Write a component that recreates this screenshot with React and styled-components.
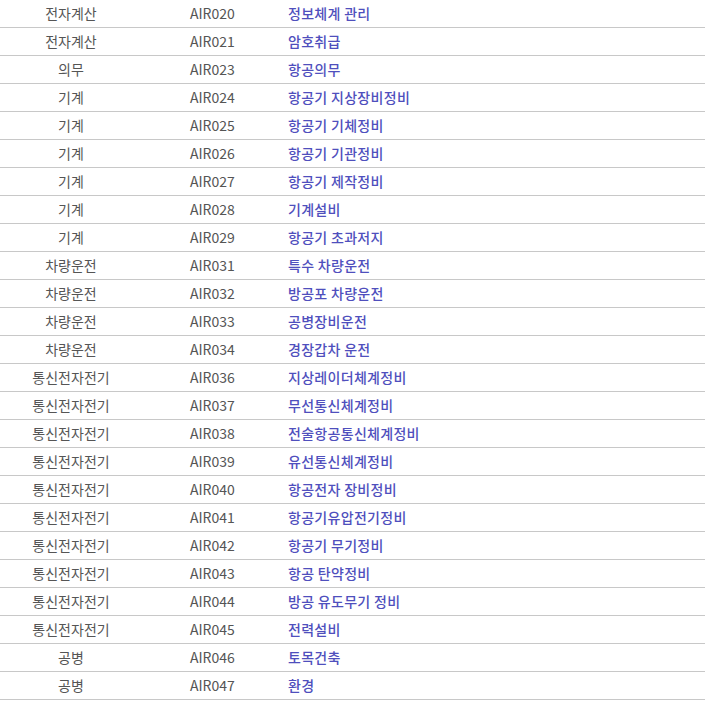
import React from "react";
import styled, { createGlobalStyle } from "styled-components";

const G = createGlobalStyle`
  body { margin: 0; background: #fff; font-family: "Noto Sans CJK KR", "Noto Sans", sans-serif; }
`;
const Table = styled.div`width: 705px; display: flex; flex-direction: column;`;
const Row = styled.div`
  display: grid; grid-template-columns: 142px 146px 1fr;
  height: 27px; border-bottom: 1px solid #c8c8c8; align-items: center;
  font-size: 14px; color: #555; line-height: 27px;
`;
const Cat = styled.div`text-align: center;`;
const Code = styled.div`padding-left: 48px;`;
const Name = styled.div`color: #4f4fbd; font-weight: 500; letter-spacing: 0.3px;`;

const data = [
["전자계산","AIR020","정보체계 관리"],["전자계산","AIR021","암호취급"],["의무","AIR023","항공의무"],
["기계","AIR024","항공기 지상장비정비"],["기계","AIR025","항공기 기체정비"],["기계","AIR026","항공기 기관정비"],
["기계","AIR027","항공기 제작정비"],["기계","AIR028","기계설비"],["기계","AIR029","항공기 초과저지"],
["차량운전","AIR031","특수 차량운전"],["차량운전","AIR032","방공포 차량운전"],["차량운전","AIR033","공병장비운전"],
["차량운전","AIR034","경장갑차 운전"],["통신전자전기","AIR036","지상레이더체계정비"],["통신전자전기","AIR037","무선통신체계정비"],
["통신전자전기","AIR038","전술항공통신체계정비"],["통신전자전기","AIR039","유선통신체계정비"],["통신전자전기","AIR040","항공전자 장비정비"],
["통신전자전기","AIR041","항공기유압전기정비"],["통신전자전기","AIR042","항공기 무기정비"],["통신전자전기","AIR043","항공 탄약정비"],
["통신전자전기","AIR044","방공 유도무기 정비"],["통신전자전기","AIR045","전력설비"],["공병","AIR046","토목건축"],["공병","AIR047","환경"],
];

export default function App() {
  return (<>
    <G />
    <Table>
      {data.map(([a,b,c]) => (
        <Row key={b}><Cat>{a}</Cat><Code>{b}</Code><Name>{c}</Name></Row>
      ))}
    </Table>
  </>);
}
